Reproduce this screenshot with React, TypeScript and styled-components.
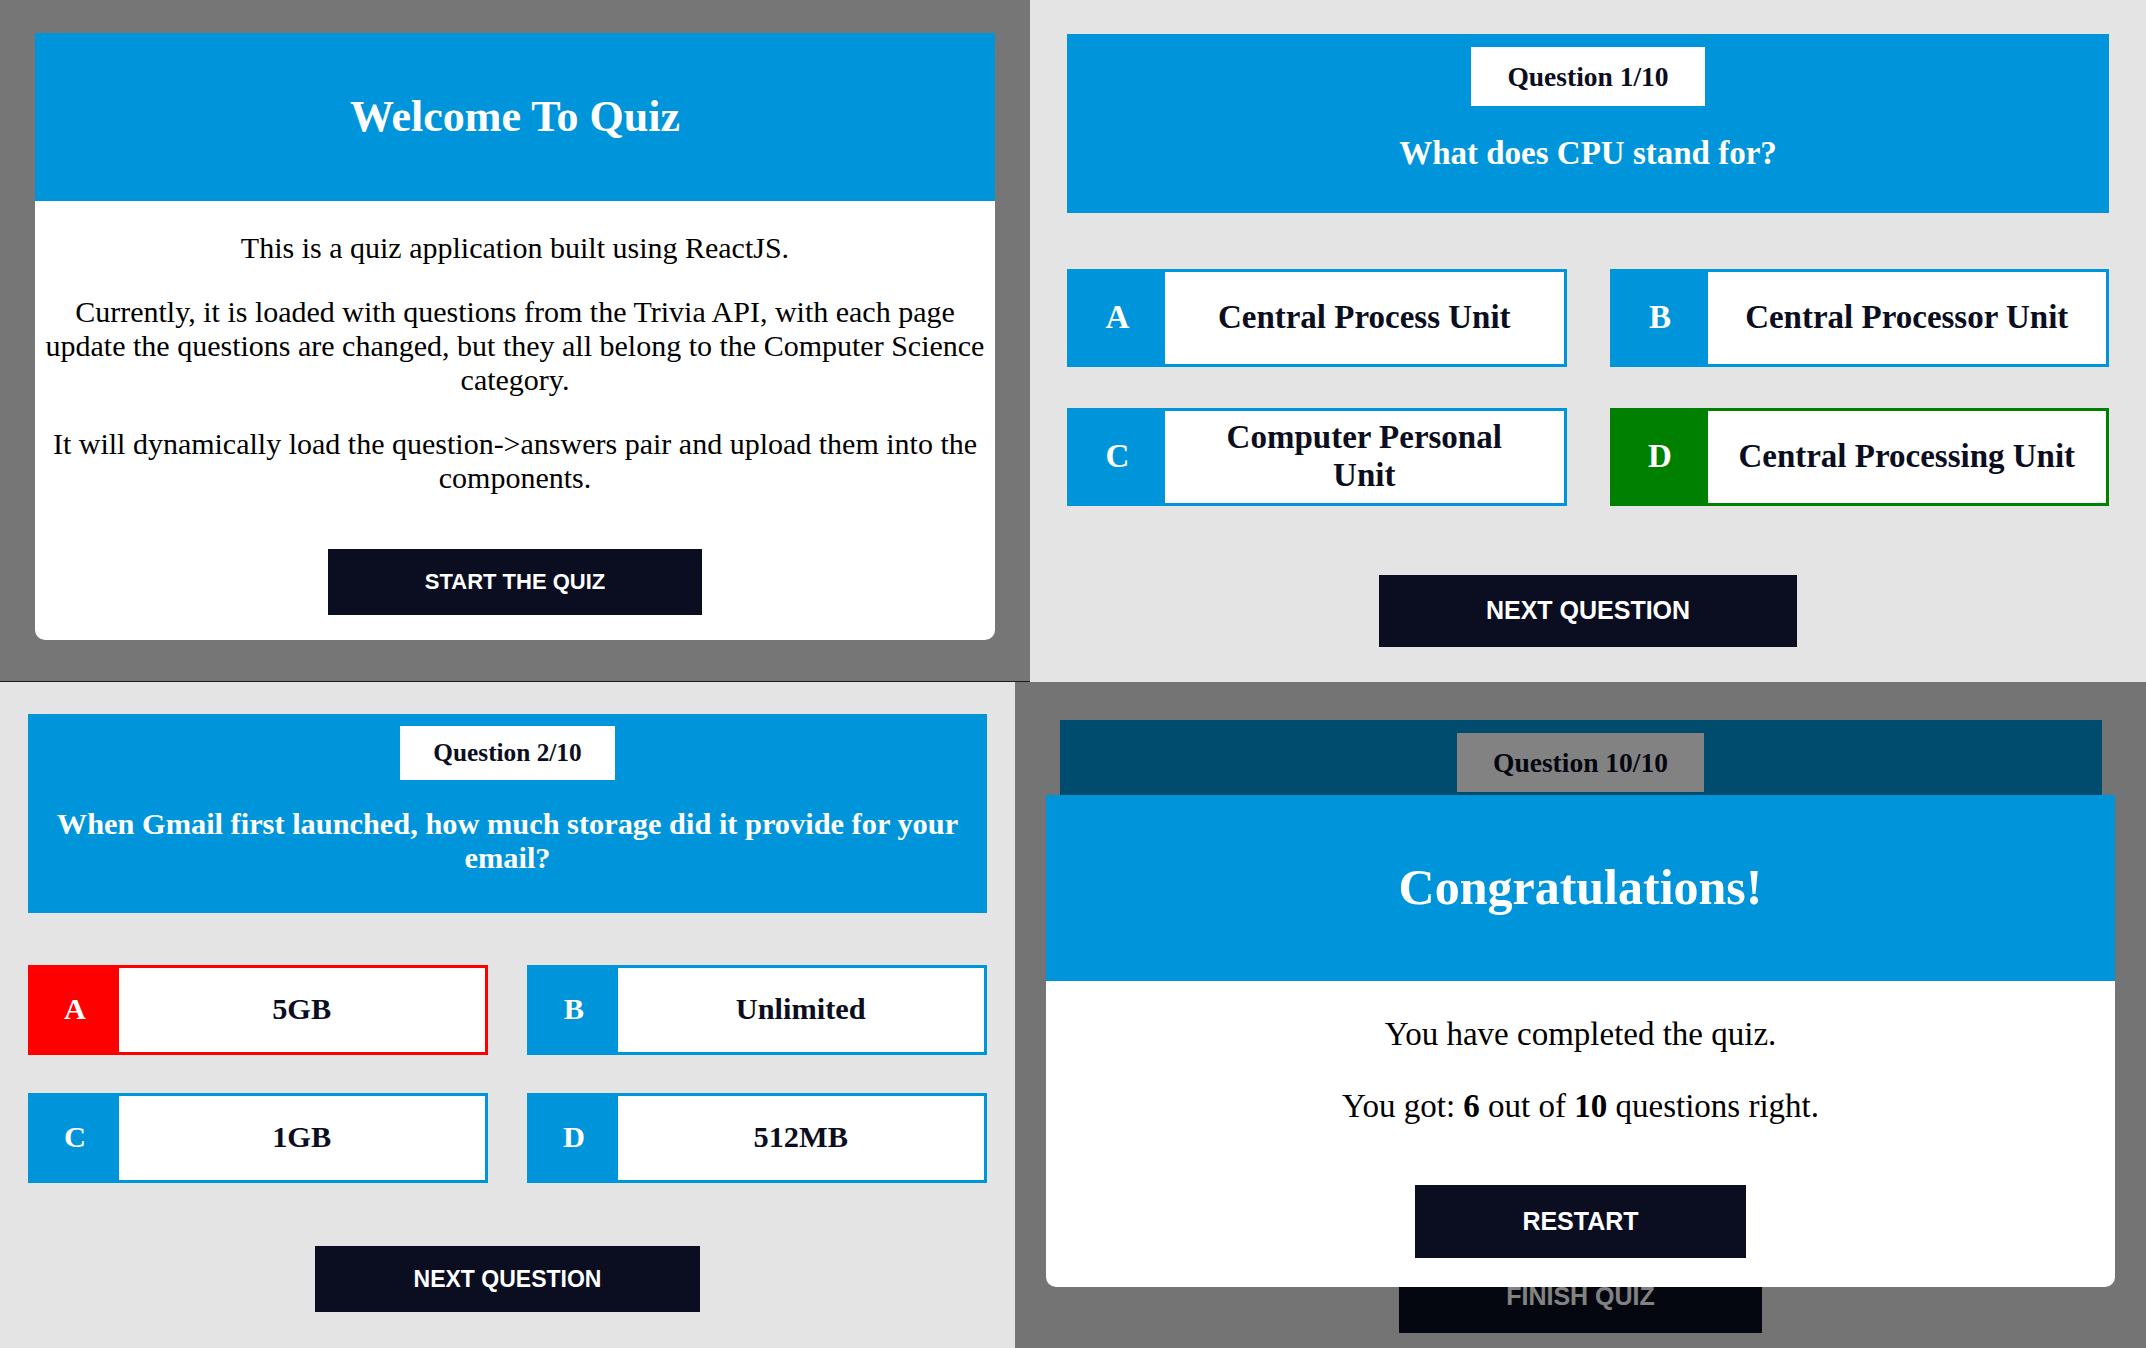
import React from "react";
import styled, { createGlobalStyle, css } from "styled-components";

const BLUE = "#0095da";
const INK = "#0b0e20";
const SERIF = `"Liberation Serif", "Times New Roman", serif`;
const SANS = `"Liberation Sans", Arial, sans-serif`;

const Global = createGlobalStyle`
  html, body { margin: 0; padding: 0; }
  body {
    width: 2146px;
    height: 1348px;
    overflow: hidden;
    font-family: ${SERIF};
    background: #e4e4e4;
  }
  * { box-sizing: border-box; }
`;

const Collage = styled.div`
  display: flex;
  flex-direction: column;
  width: 2146px;
  height: 1348px;
`;

const Row = styled.div<{ $h: number }>`
  display: flex;
  flex: none;
  height: ${(p) => p.$h}px;
`;

const Pane = styled.div<{ $w: number; $bg: string; $line?: boolean }>`
  position: relative;
  flex: none;
  width: ${(p) => p.$w}px;
  height: 100%;
  background: ${(p) => p.$bg};
  overflow: hidden;
  ${(p) =>
    p.$line &&
    css`
      border-bottom: 1px solid #1c1c1c;
    `}
`;

/* ---------- Info card (welcome / result) ---------- */

type CardSpec = {
  w: number;
  hh: number;
  title: number;
  text: number;
  lh: number;
  pm: number;
  btn: number;
  bp: number;
  bh: number;
  gap: number;
  bottom: number;
};

const CardArea = styled.div<{ $top: number }>`
  display: flex;
  justify-content: center;
  padding-top: ${(p) => p.$top}px;
`;

const Card = styled.div<{ $w: number }>`
  width: ${(p) => p.$w}px;
  background: #fff;
  border-radius: 0 0 10px 10px;
  overflow: hidden;
`;

const CardHeader = styled.div<{ $h: number }>`
  height: ${(p) => p.$h}px;
  background: ${BLUE};
  display: flex;
  align-items: center;
  justify-content: center;
`;

const CardTitle = styled.h1<{ $size: number }>`
  margin: 0;
  color: #fff;
  font-family: ${SERIF};
  font-weight: bold;
  font-size: ${(p) => p.$size}px;
  line-height: 1.15;
`;

const CardBody = styled.div<{ $size: number; $lh: number; $pm: number; $bottom: number }>`
  display: flow-root;
  padding: 0 8px ${(p) => p.$bottom}px;
  text-align: center;
  color: #000;
  font-family: ${SERIF};
  font-size: ${(p) => p.$size}px;
  line-height: ${(p) => p.$lh}px;

  p {
    margin: ${(p) => p.$pm}px 0;
  }
`;

const ButtonRow = styled.div<{ $gap: number }>`
  display: flex;
  justify-content: center;
  padding-top: ${(p) => p.$gap}px;
`;

const ActionButton = styled.button<{ $size: number; $px: number; $h: number }>`
  height: ${(p) => p.$h}px;
  padding: 0 ${(p) => p.$px}px;
  border: none;
  border-radius: 0;
  background: ${INK};
  color: #fff;
  font-family: ${SANS};
  font-weight: bold;
  font-size: ${(p) => p.$size}px;
  text-transform: uppercase;
  white-space: nowrap;
  cursor: pointer;
`;

function InfoCard({
  spec,
  title,
  button,
  children,
}: {
  spec: CardSpec;
  title: string;
  button: string;
  children: React.ReactNode;
}) {
  return (
    <Card $w={spec.w}>
      <CardHeader $h={spec.hh}>
        <CardTitle $size={spec.title}>{title}</CardTitle>
      </CardHeader>
      <CardBody $size={spec.text} $lh={spec.lh} $pm={spec.pm} $bottom={spec.bottom}>
        {children}
        <ButtonRow $gap={spec.gap}>
          <ActionButton $size={spec.btn} $px={spec.bp} $h={spec.bh}>
            {button}
          </ActionButton>
        </ButtonRow>
      </CardBody>
    </Card>
  );
}

/* ---------- Question screen ---------- */

const QuizScreen = styled.div<{ $top: number }>`
  display: flex;
  flex-direction: column;
  align-items: center;
  padding-top: ${(p) => p.$top}px;
`;

const QuestionHeader = styled.div<{ $s: number }>`
  width: ${(p) => 1042 * p.$s}px;
  background: ${BLUE};
  display: flex;
  flex-direction: column;
  align-items: center;
  padding: ${(p) => 13 * p.$s}px ${(p) => 16 * p.$s}px ${(p) => 40 * p.$s}px;
`;

const Badge = styled.div<{ $s: number }>`
  background: #fff;
  color: ${INK};
  font-family: ${SERIF};
  font-weight: bold;
  font-size: ${(p) => 27.5 * p.$s}px;
  line-height: 1.15;
  padding: ${(p) => 13.5 * p.$s}px ${(p) => 36 * p.$s}px;
  white-space: nowrap;
`;

const QuestionText = styled.h2<{ $s: number }>`
  margin: ${(p) => 29 * p.$s}px 0 0;
  color: #fff;
  font-family: ${SERIF};
  font-weight: bold;
  font-size: ${(p) => 33 * p.$s}px;
  line-height: 1.15;
  text-align: center;
`;

const AnswerGrid = styled.div<{ $s: number }>`
  width: ${(p) => 1042 * p.$s}px;
  margin-top: ${(p) => 56 * p.$s}px;
  display: grid;
  grid-template-columns: 1fr 1fr;
  column-gap: ${(p) => 43 * p.$s}px;
  row-gap: ${(p) => 41 * p.$s}px;
`;

const Answer = styled.div<{ $s: number; $c: string }>`
  display: flex;
  height: ${(p) => 98 * p.$s}px;
  border: 3px solid ${(p) => p.$c};
  background: #fff;
`;

const Letter = styled.div<{ $s: number; $c: string }>`
  flex: none;
  width: ${(p) => 95 * p.$s}px;
  background: ${(p) => p.$c};
  color: #fff;
  display: flex;
  align-items: center;
  justify-content: center;
  font-family: ${SERIF};
  font-weight: bold;
  font-size: ${(p) => 33 * p.$s}px;
`;

const AnswerText = styled.div<{ $s: number }>`
  flex: 1;
  display: flex;
  align-items: center;
  justify-content: center;
  text-align: center;
  padding: 0 ${(p) => 28 * p.$s}px;
  color: ${INK};
  font-family: ${SERIF};
  font-weight: bold;
  font-size: ${(p) => 33 * p.$s}px;
  line-height: 1.15;
`;

const NextRow = styled.div<{ $s: number }>`
  display: flex;
  justify-content: center;
  margin-top: ${(p) => 69 * p.$s}px;
`;

type Choice = { text: string; state?: "correct" | "wrong" };

const stateColor = (c: Choice) =>
  c.state === "correct" ? "#008000" : c.state === "wrong" ? "#ff0000" : BLUE;

function QuestionView({
  s,
  top,
  label,
  question,
  choices,
  button,
  covered,
}: {
  s: number;
  top: number;
  label: string;
  question: string;
  choices: Choice[];
  button: string;
  covered?: boolean;
}) {
  const letters = ["A", "B", "C", "D"];
  return (
    <QuizScreen $top={top}>
      <QuestionHeader $s={s}>
        <Badge $s={s}>{label}</Badge>
        <QuestionText $s={s}>{covered ? "\u00a0" : question}</QuestionText>
      </QuestionHeader>
      <AnswerGrid $s={s}>
        {choices.map((c, i) => (
          <Answer key={i} $s={s} $c={stateColor(c)}>
            <Letter $s={s} $c={stateColor(c)}>
              {covered ? "" : letters[i]}
            </Letter>
            <AnswerText $s={s}>{covered ? "" : c.text}</AnswerText>
          </Answer>
        ))}
      </AnswerGrid>
      <NextRow $s={s}>
        <ActionButton $size={25 * s} $px={107 * s} $h={72 * s}>
          {button}
        </ActionButton>
      </NextRow>
    </QuizScreen>
  );
}

/* ---------- Overlay ---------- */

const Dim = styled.div`
  position: absolute;
  inset: 0;
  background: rgba(0, 0, 0, 0.49);
`;

const ModalLayer = styled.div<{ $top: number }>`
  position: absolute;
  left: 0;
  right: 0;
  top: ${(p) => p.$top}px;
  display: flex;
  justify-content: center;
`;

const welcomeSpec: CardSpec = {
  w: 960,
  hh: 168,
  title: 44,
  text: 30,
  lh: 34,
  pm: 30,
  btn: 22,
  bp: 97,
  bh: 66,
  gap: 24,
  bottom: 25,
};

const resultSpec: CardSpec = {
  w: 1069,
  hh: 186,
  title: 50,
  text: 33,
  lh: 38,
  pm: 34,
  btn: 25,
  bp: 107,
  bh: 73,
  gap: 26,
  bottom: 29,
};

export default function App() {
  return (
    <>
      <Global />
      <Collage>
        <Row $h={682}>
          <Pane $w={1030} $bg="#767676" $line>
            <CardArea $top={33}>
              <InfoCard spec={welcomeSpec} title="Welcome To Quiz" button="Start the quiz">
                <p>This is a quiz application built using ReactJS.</p>
                <p>
                  Currently, it is loaded with questions from the Trivia API, with each page
                  update the questions are changed, but they all belong to the Computer Science
                  category.
                </p>
                <p>
                  It will dynamically load the question-&gt;answers pair and upload them into the
                  components.
                </p>
              </InfoCard>
            </CardArea>
          </Pane>
          <Pane $w={1116} $bg="#e4e4e4">
            <QuestionView
              s={1}
              top={34}
              label="Question 1/10"
              question="What does CPU stand for?"
              choices={[
                { text: "Central Process Unit" },
                { text: "Central Processor Unit" },
                { text: "Computer Personal Unit" },
                { text: "Central Processing Unit", state: "correct" },
              ]}
              button="Next question"
            />
          </Pane>
        </Row>
        <Row $h={666}>
          <Pane $w={1015} $bg="#e4e4e4">
            <QuestionView
              s={0.92}
              top={32}
              label="Question 2/10"
              question="When Gmail first launched, how much storage did it provide for your email?"
              choices={[
                { text: "5GB", state: "wrong" },
                { text: "Unlimited" },
                { text: "1GB" },
                { text: "512MB" },
              ]}
              button="Next question"
            />
          </Pane>
          <Pane $w={1131} $bg="#e4e4e4">
            <QuestionView
              s={1}
              top={38}
              covered
              label="Question 10/10"
              question=""
              choices={[{ text: "" }, { text: "" }, { text: "" }, { text: "" }]}
              button="Finish quiz"
            />
            <Dim />
            <ModalLayer $top={113}>
              <InfoCard spec={resultSpec} title="Congratulations!" button="Restart">
                <p>You have completed the quiz.</p>
                <p>
                  You got: <b>6</b> out of <b>10</b> questions right.
                </p>
              </InfoCard>
            </ModalLayer>
          </Pane>
        </Row>
      </Collage>
    </>
  );
}
